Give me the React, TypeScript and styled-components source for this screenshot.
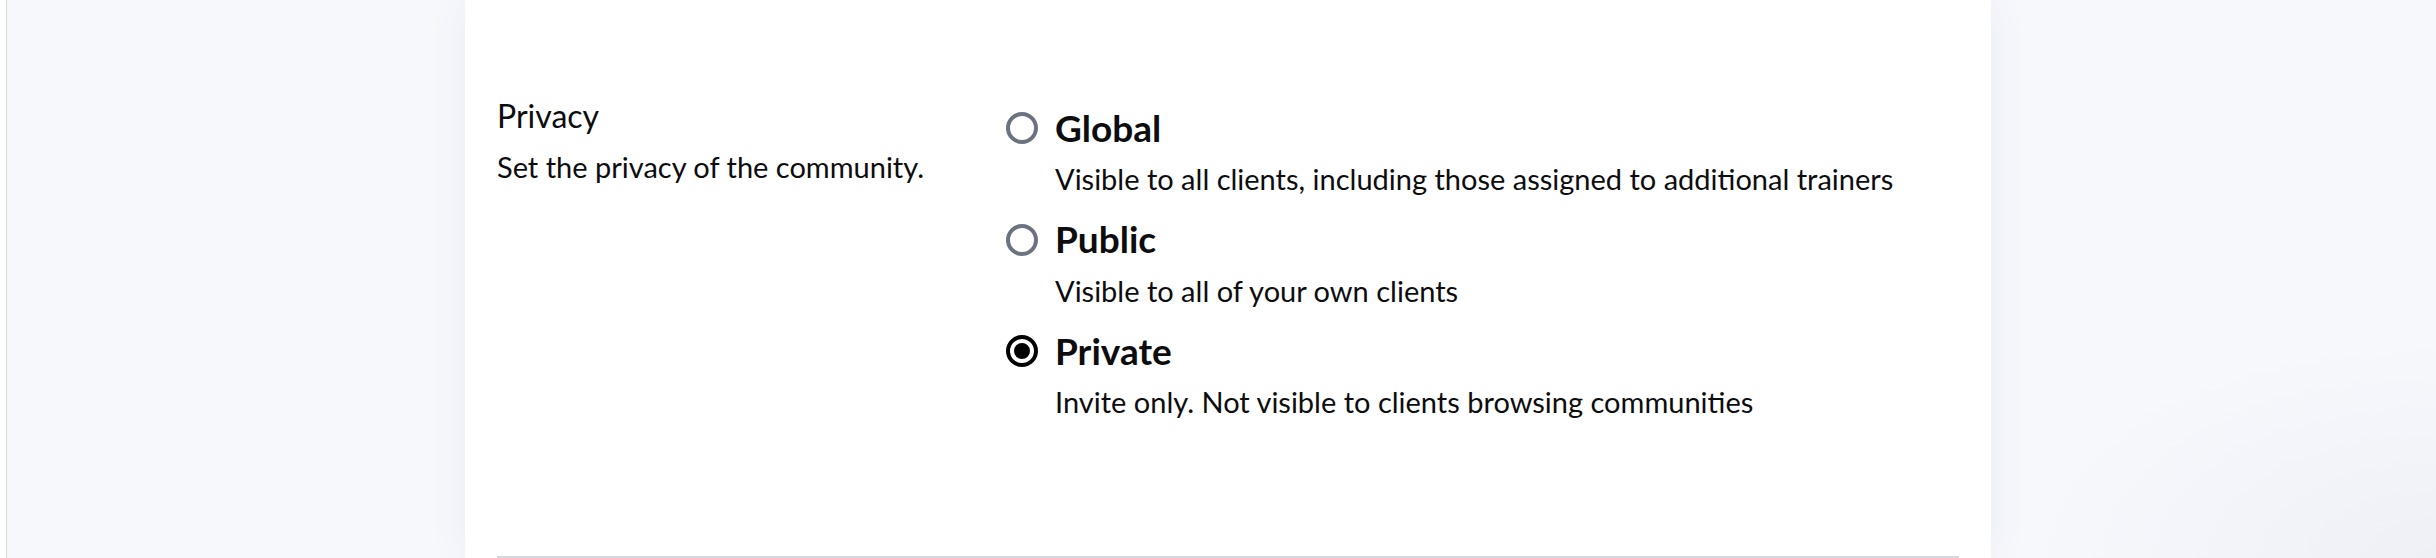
import React, { useState } from 'react';
import styled, { createGlobalStyle } from 'styled-components';

type Option = {
  value: string;
  title: string;
  description: string;
};

const options: Option[] = [
  {
    value: 'global',
    title: 'Global',
    description: 'Visible to all clients, including those assigned to additional trainers',
  },
  {
    value: 'public',
    title: 'Public',
    description: 'Visible to all of your own clients',
  },
  {
    value: 'private',
    title: 'Private',
    description: 'Invite only. Not visible to clients browsing communities',
  },
];

const GlobalStyle = createGlobalStyle`
  html, body {
    margin: 0;
    padding: 0;
    background: #ffffff;
    overflow: hidden;
  }
  body {
    font-family: Lato, "Noto Sans", sans-serif;
    color: #0d0d0f;
  }
`;

const App: React.FC = () => {
  const [privacy, setPrivacy] = useState('private');

  return (
    <>
      <GlobalStyle />
      <Shell>
        <Sidebar />
        <Main>
          <Panel>
            <Section>
              <Info>
                <Label>Privacy</Label>
                <Hint>Set the privacy of the community.</Hint>
              </Info>
              <Choices>
                {options.map((option) => {
                  const checked = privacy === option.value;
                  return (
                    <Choice key={option.value} onClick={() => setPrivacy(option.value)}>
                      <ChoiceHead>
                        <Radio $checked={checked} />
                        <ChoiceTitle>{option.title}</ChoiceTitle>
                      </ChoiceHead>
                      <ChoiceText>{option.description}</ChoiceText>
                    </Choice>
                  );
                })}
              </Choices>
            </Section>
            <Divider />
          </Panel>
        </Main>
      </Shell>
    </>
  );
};

const Shell = styled.div`
  display: flex;
  height: 558px;
  overflow: hidden;
`;

const Sidebar = styled.div`
  width: 6px;
  flex-shrink: 0;
  background: #ffffff;
  border-right: 1px solid #d8dce4;
`;

const Main = styled.div`
  flex: 1;
  display: flex;
  padding-left: 458px;
  background:
    radial-gradient(ellipse 420px 220px at 100% 100%, #eef0f6 0%, rgba(247, 248, 252, 0) 100%),
    #f7f8fc;
`;

const Panel = styled.div`
  width: 1526px;
  height: 100%;
  box-sizing: border-box;
  padding: 97px 32px 0;
  background: #ffffff;
  box-shadow: 0 0 36px rgba(60, 90, 190, 0.07);
  display: flex;
  flex-direction: column;
`;

const Section = styled.div`
  display: grid;
  grid-template-columns: 509px 1fr;
  flex: 1;
`;

const Info = styled.div`
  display: flex;
  flex-direction: column;
`;

const Label = styled.div`
  font-size: 32px;
  line-height: 1.2;
  font-weight: 400;
`;

const Hint = styled.div`
  margin-top: 10px;
  font-size: 29px;
  line-height: 1.5;
`;

const Choices = styled.div`
  display: flex;
  flex-direction: column;
  gap: 17px;
  padding-top: 9px;
`;

const Choice = styled.label`
  display: flex;
  flex-direction: column;
  gap: 8px;
  cursor: pointer;
`;

const ChoiceHead = styled.div`
  display: flex;
  align-items: center;
  gap: 17px;
`;

const Radio = styled.span<{ $checked: boolean }>`
  width: 32px;
  height: 32px;
  box-sizing: border-box;
  flex-shrink: 0;
  border-radius: 50%;
  border: 4px solid ${(p) => (p.$checked ? '#000000' : '#6b7280')};
  display: flex;
  align-items: center;
  justify-content: center;

  &::after {
    content: '';
    width: 16px;
    height: 16px;
    border-radius: 50%;
    background: #000000;
    display: ${(p) => (p.$checked ? 'block' : 'none')};
  }
`;

const ChoiceTitle = styled.span`
  font-size: 37px;
  line-height: 1.2;
  font-weight: 700;
`;

const ChoiceText = styled.span`
  padding-left: 49px;
  font-size: 29px;
  line-height: 1.45;
`;

const Divider = styled.div`
  height: 2px;
  background: #d4d7de;
`;

export default App;
